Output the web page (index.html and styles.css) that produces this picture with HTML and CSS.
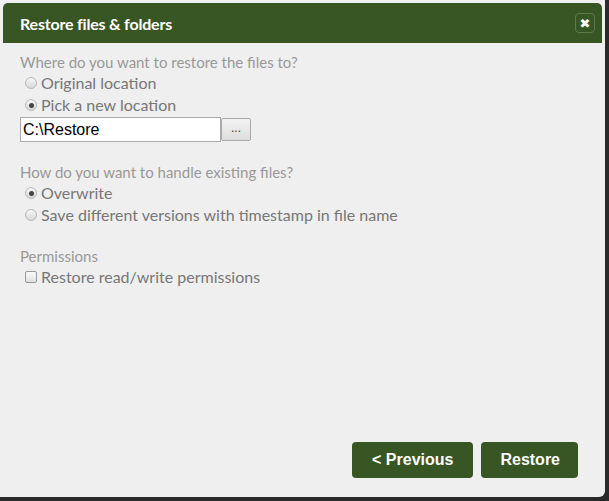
FILE: index.html
```html
<!DOCTYPE html>
<html>
<head>
<meta charset="utf-8">
<link rel="stylesheet" href="styles.css">
</head>
<body>
<div class="dialog">
  <div class="header">
    <span class="title">Restore files &amp; folders</span>
    <span class="close">&#10006;</span>
  </div>
  <div class="body">
    <div class="group">
      <div class="question">Where do you want to restore the files to?</div>
      <label class="opt"><span class="radio"></span>Original location</label>
      <label class="opt"><span class="radio on"></span>Pick a new location</label>
      <div class="pathrow">
        <span class="path">C:\Restore</span>
        <span class="browse">...</span>
      </div>
    </div>
    <div class="group">
      <div class="question">How do you want to handle existing files?</div>
      <label class="opt"><span class="radio on"></span>Overwrite</label>
      <label class="opt"><span class="radio"></span>Save different versions with timestamp in file name</label>
    </div>
    <div class="group">
      <div class="question">Permissions</div>
      <label class="opt"><span class="check"></span>Restore read/write permissions</label>
    </div>
  </div>
  <div class="footer">
    <span class="btn btn-prev">&lt; Previous</span>
    <span class="btn btn-restore">Restore</span>
  </div>
</div>
</body>
</html>
```

FILE: styles.css
```css
html, body { margin: 0; padding: 0; }
body {
  background: #2a2a2a;
  width: 609px;
  height: 501px;
  overflow: hidden;
  font-family: Lato, "Open Sans", sans-serif;
}
.dialog {
  width: 605px;
  height: 497px;
  background: #efefef;
  border-bottom-right-radius: 6px;
  display: flex;
  flex-direction: column;
  box-sizing: border-box;
  padding: 3px 3px 0 3px;
}
.header {
  height: 40px;
  background: #375623;
  border-radius: 5px 5px 0 0;
  display: flex;
  align-items: center;
  justify-content: space-between;
  padding: 0 7px 0 17px;
}
.title {
  color: #fff;
  font-weight: bold;
  font-size: 16px;
  letter-spacing: -0.2px;
}
.close {
  width: 18px;
  height: 18px;
  border: 1px solid #5d7a4a;
  border-radius: 4px;
  color: #fff;
  font-size: 13px;
  font-weight: bold;
  display: flex;
  align-items: center;
  justify-content: center;
  font-family: "DejaVu Sans", sans-serif;
}
.body {
  padding: 9px 17px 0 17px;
  flex: 1;
}
.group { margin-bottom: 20px; }
.question {
  color: #999;
  font-size: 15px;
  line-height: 20px;
}
.opt {
  display: flex;
  align-items: center;
  color: #777;
  font-size: 16px;
  line-height: 22px;
  padding-left: 5px;
}
.radio {
  width: 12px;
  height: 12px;
  border-radius: 50%;
  border: 1px solid #b8b8b8;
  background: linear-gradient(#f6f6f6, #d8d8d8);
  box-sizing: border-box;
  margin-right: 4px;
  position: relative;
}
.radio.on::after {
  content: "";
  position: absolute;
  left: 2.5px; top: 2.5px;
  width: 5px; height: 5px;
  border-radius: 50%;
  background: #444;
}
.check {
  width: 12px;
  height: 12px;
  border: 1px solid #999;
  border-radius: 2px;
  background: linear-gradient(#fafafa, #e0e0e0);
  box-sizing: border-box;
  margin-right: 4px;
}
.pathrow {
  display: flex;
  align-items: center;
  margin-top: 1px;
}
.path {
  width: 201px;
  height: 25px;
  box-sizing: border-box;
  border: 1px solid #a9a9a9;
  background: #fff;
  font-family: "Liberation Sans", Arial, sans-serif;
  font-size: 16px;
  line-height: 23px;
  padding-left: 2px;
  color: #000;
}
.browse {
  width: 30px;
  height: 23px;
  box-sizing: border-box;
  border: 1px solid #aaa;
  border-radius: 2px;
  background: linear-gradient(#f2f2f2, #dedede);
  font-family: "Liberation Sans", Arial, sans-serif;
  font-size: 12px;
  line-height: 18px;
  text-align: center;
  color: #333;
}
.footer {
  display: flex;
  justify-content: flex-end;
  gap: 8px;
  padding: 0 24px 19px 0;
}
.btn {
  background: #375623;
  color: #fff;
  font-family: "Liberation Sans", Arial, sans-serif;
  font-weight: bold;
  font-size: 16px;
  height: 36px;
  line-height: 36px;
  border-radius: 4px;
}
.btn-prev { padding: 0 20px; }
.btn-restore { padding: 0 18px 0 19px; }
```
